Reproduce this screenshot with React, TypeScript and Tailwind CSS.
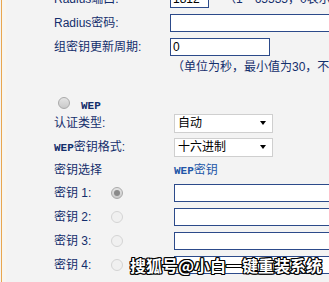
import React from 'react';

const font = "font-[family-name:'Liberation_Sans','Noto_Sans_CJK_SC',sans-serif]";
const labelCls = `text-[12px] leading-none text-[#132e6c] ${font}`;

// small latin caps used by the old router UI (WEP)
function Wep() {
  return <span className="font-[family-name:'Liberation_Mono',monospace] text-[11px] font-bold">WEP</span>;
}

function Radio({ checked = false, faint = false }: { checked?: boolean; faint?: boolean }) {
  return (
    <span
      className={`flex h-[12px] w-[12px] items-center justify-center rounded-full border ${
        faint ? 'border-[#d4d4d4] bg-[#f0f0f0]' : 'border-[#a9a9a9] bg-gradient-to-b from-[#e4e4e4] to-[#c9c9c9]'
      }`}
    >
      {checked && <span className="h-[6px] w-[6px] rounded-full bg-[#8a8a8a]" />}
    </span>
  );
}

function TextBox({ w, value = '' }: { w: string; value?: string }) {
  return (
    <div className={`${w} flex h-[18px] shrink-0 items-center border border-[#2c4a8a] bg-white pl-[2px] text-[12px] text-black ${font}`}>
      {value}
    </div>
  );
}

function Select({ value }: { value: string }) {
  return (
    <div className={`ml-[4px] flex h-[19px] w-[99px] items-center justify-between border border-[#cfcfcf] bg-white pl-[3px] pr-[6px] text-[12px] text-black ${font}`}>
      <span>{value}</span>
      <span className="h-0 w-0 border-x-[3.5px] border-t-[4px] border-x-transparent border-t-black" />
    </div>
  );
}

function Row({ label, children, h = 'h-[24px]' }: { label: React.ReactNode; children?: React.ReactNode; h?: string }) {
  return (
    <div className={`flex ${h} items-center`}>
      <div className={`w-[116px] shrink-0 ${labelCls}`}>{label}</div>
      {children}
    </div>
  );
}

function KeyRow({ n, checked }: { n: number; checked?: boolean }) {
  return (
    <div className="flex h-[24px] items-center">
      <div className={`w-[57px] shrink-0 ${labelCls}`}>密钥 {n}:</div>
      <Radio checked={checked} faint={!checked} />
      <div className="ml-[51px]">
        <TextBox w="w-[170px]" />
      </div>
    </div>
  );
}

export default function App() {
  return (
    <div className="relative flex h-[282px] w-[329px] overflow-hidden bg-[#f3f3f3]">
      {/* left frame edge */}
      <div className="ml-[1px] w-[1px] shrink-0 bg-[#e9a64e]" />
      <div className="w-[4px] shrink-0 bg-[#f8f5ef]" />

      <div className="-mt-[13px] flex flex-col pl-[48px] whitespace-nowrap">
        <Row label={<>Radius端口:</>}>
          <TextBox w="w-[39px]" value="1812" />
          <span className={`ml-[15px] ${labelCls} text-[#1d4595]`}>（1－65535，0表示默认值1812）</span>
        </Row>
        <Row label={<>Radius密码:</>}>
          <TextBox w="w-[170px]" />
        </Row>
        <Row label="组密钥更新周期:">
          <TextBox w="w-[100px]" value="0" />
        </Row>
        <div className="flex h-[16px] items-center">
          <span className={`ml-[118px] ${labelCls} text-[#1d4595]`}>（单位为秒，最小值为30，不更新则为0）</span>
        </div>

        <div className="mt-[20px] flex h-[16px] items-center pl-[4px] text-[#132e6c]">
          <Radio />
          <span className="ml-[11px]">
            <Wep />
          </span>
        </div>
        <Row label="认证类型:">
          <Select value="自动" />
        </Row>
        <Row label={<><Wep />密钥格式:</>}>
          <Select value="十六进制" />
        </Row>
        <Row label="密钥选择" h="h-[22px]">
          <span className={`ml-[4px] ${labelCls} text-[#2256a8]`}>
            <Wep />密钥
          </span>
        </Row>
        <KeyRow n={1} checked />
        <KeyRow n={2} />
        <KeyRow n={3} />
        <KeyRow n={4} />
      </div>

      {/* site watermark */}
      <div
        className="absolute left-[130px] top-[257px] text-[16px] font-bold leading-none text-white font-[family-name:'Noto_Sans_CJK_SC',sans-serif] [text-shadow:-1px_-1px_0_#000,1px_-1px_0_#000,-1px_1px_0_#000,1px_1px_0_#000,0_1px_0_#000,0_-1px_0_#000,1px_0_0_#000,-1px_0_0_#000]"
      >
        搜狐号@小白一键重装系统
      </div>
    </div>
  );
}
